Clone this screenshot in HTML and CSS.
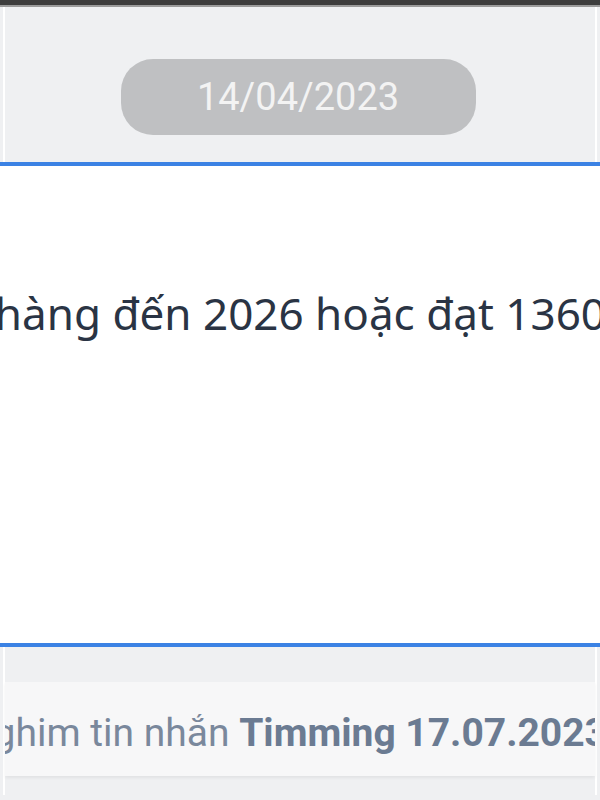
FILE: index.html
```html
<!DOCTYPE html>
<html lang="vi">
<head>
    <meta charset="UTF-8">
    <meta name="viewport" content="width=device-width, initial-scale=1.0">
    <title>Tin nhắn</title>
    <link rel="stylesheet" href="styles.css">
</head>
<body>

    <div class="topbar"></div>

    <div class="screen">
        <div class="date-row">
            <div class="date-pill">14/04/2023</div>
        </div>

        <div class="message">
            <p class="message-text">Doanh số bán hàng đến 2026 hoặc đạt 1360</p>
        </div>

        <div class="pinned">
            <p class="pinned-text">Bạn đã ghim tin nhắn <b>Timming 17.07.2023</b></p>
        </div>
    </div>

</body>
</html>
```

FILE: styles.css
```css
body {
    margin: 0;
    background-color: #eff0f2;
    font-family: Roboto, "Noto Sans", sans-serif;
    overflow: hidden;
}

.topbar {
    height: 5px;
    background-color: #3d3d3d;
    border-bottom: 2px solid #9b9b9b;
}

.screen {
    margin: 0 3px;
    border-left: 2px solid #fff;
    border-right: 2px solid #fff;
    height: 788px;
}

.date-row {
    display: flex;
    justify-content: center;
    padding: 52px 0 27px;
    margin: 0 -5px;
}

.date-pill {
    width: 355px;
    height: 76px;
    margin-left: -4px;
    border-radius: 32px;
    background-color: #bfc0c2;
    color: #f3f3f3;
    font-size: 38px;
    display: flex;
    align-items: center;
    justify-content: center;
}

.message {
    margin: 0 -5px;
    height: 477px;
    background-color: #fff;
    border-top: 4px solid #3b82e4;
    border-bottom: 4px solid #3b82e4;
    display: flex;
    justify-content: flex-end;
    overflow: hidden;
}

.message-text {
    margin: 117px -6px 0 0;
    white-space: nowrap;
    font-family: "Noto Sans", sans-serif;
    font-size: 44px;
    color: #2a3444;
}

.pinned {
    margin-top: 35px;
    height: 94px;
    background-color: #f7f7f8;
    box-shadow: 0 2px 3px rgba(0, 0, 0, 0.06);
    display: flex;
    justify-content: flex-end;
    align-items: center;
    overflow: hidden;
}

.pinned-text {
    margin: 8px -12px 0 0;
    white-space: nowrap;
    font-size: 39px;
    color: #7a889c;
}

.pinned-text b {
    font-weight: 700;
    color: #6b7b92;
}
```
